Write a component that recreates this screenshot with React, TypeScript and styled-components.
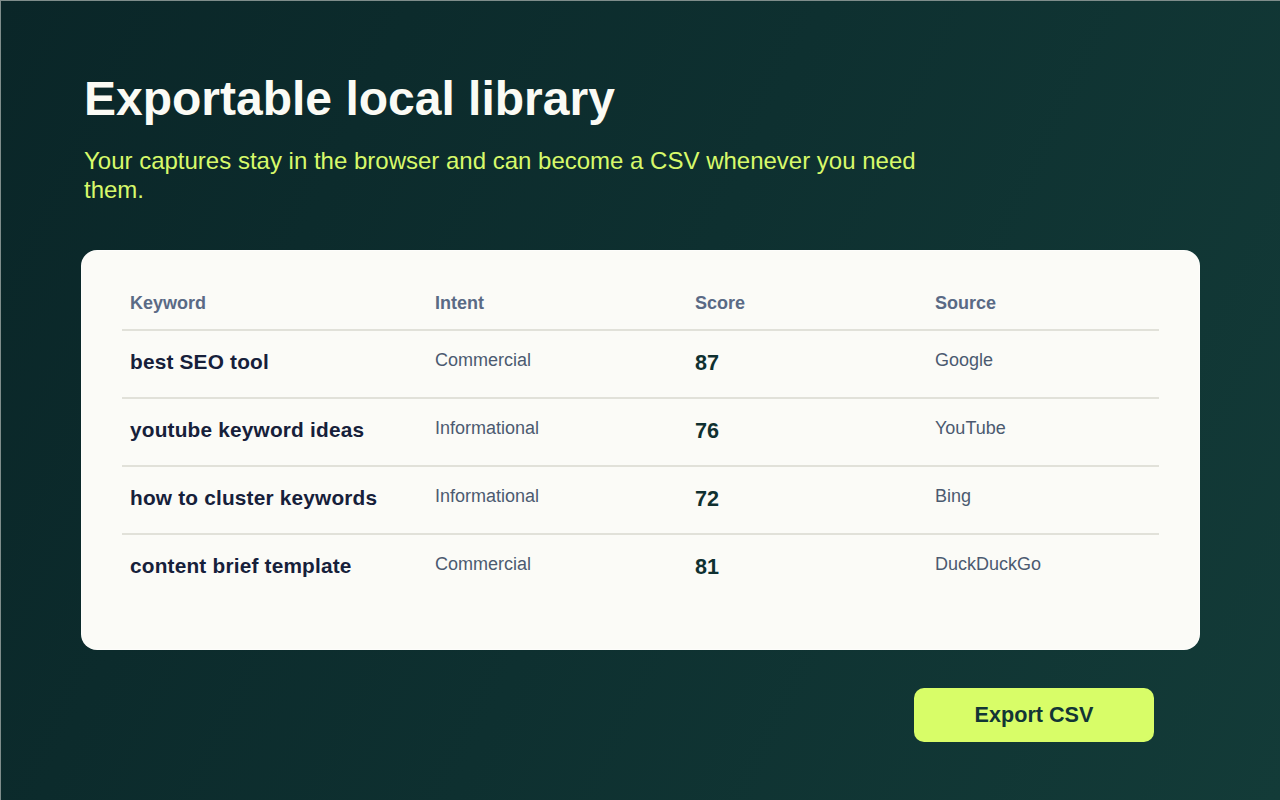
import React from "react";
import styled, { createGlobalStyle } from "styled-components";

type Row = {
  keyword: string;
  intent: string;
  score: number;
  source: string;
};

const rows: Row[] = [
  { keyword: "best SEO tool", intent: "Commercial", score: 87, source: "Google" },
  { keyword: "youtube keyword ideas", intent: "Informational", score: 76, source: "YouTube" },
  { keyword: "how to cluster keywords", intent: "Informational", score: 72, source: "Bing" },
  { keyword: "content brief template", intent: "Commercial", score: 81, source: "DuckDuckGo" },
];

function App() {
  return (
    <>
      <GlobalStyle />
      <Page>
        <Header>
          <Title>Exportable local library</Title>
          <Subtitle>
            Your captures stay in the browser and can become a CSV whenever you need them.
          </Subtitle>
        </Header>
        <Card>
          <HeadRow>
            <HeadCell>Keyword</HeadCell>
            <HeadCell>Intent</HeadCell>
            <HeadCell>Score</HeadCell>
            <HeadCell>Source</HeadCell>
          </HeadRow>
          {rows.map((r) => (
            <BodyRow key={r.keyword}>
              <Keyword>{r.keyword}</Keyword>
              <Muted>{r.intent}</Muted>
              <Score>{r.score}</Score>
              <Muted>{r.source}</Muted>
            </BodyRow>
          ))}
        </Card>
        <Actions>
          <ExportButton>Export CSV</ExportButton>
        </Actions>
      </Page>
    </>
  );
}

export default App;

const GlobalStyle = createGlobalStyle`
  * { box-sizing: border-box; }
  html, body {
    margin: 0;
    padding: 0;
    font-family: "Liberation Sans", Arial, sans-serif;
    background: #0c2a2b;
  }
`;

const Page = styled.div`
  min-height: 800px;
  padding: 71px 80px 0;
  background: linear-gradient(115deg, #0a2628 0%, #0e3030 50%, #133b38 100%);
  border-top: 1px solid #7f8d8b;
  border-left: 1px solid #7f8d8b;
`;

const Header = styled.div`
  max-width: 860px;
  padding-left: 3px;
`;

const Title = styled.h1`
  margin: 0 0 20px;
  font-size: 48px;
  font-weight: 700;
  line-height: 1.12;
  color: #fbfbf5;
`;

const Subtitle = styled.p`
  margin: 0;
  font-size: 24px;
  line-height: 29px;
  color: #d7f96a;
`;

const Card = styled.div`
  margin-top: 46px;
  height: 400px;
  padding: 40px 40px 48px;
  background: #fbfbf7;
  border: 1px solid rgba(255, 255, 255, 0.45);
  border-radius: 16px;
`;

const grid = `
  display: grid;
  grid-template-columns: 305px 260px 240px 1fr;
  align-items: start;
`;

const HeadRow = styled.div`
  ${grid};
  border-bottom: 2px solid #e1e1d9;
  margin-top: -1px;
`;

const HeadCell = styled.div`
  padding: 2px 8px 15px;
  font-size: 18px;
  line-height: 22px;
  font-weight: 700;
  color: #5a6a85;
`;

const BodyRow = styled.div`
  ${grid};
  height: 68px;
  &:not(:last-child) {
    border-bottom: 2px solid #e1e1d9;
  }
`;

const Cell = styled.div`
  padding: 19px 8px 0;
  line-height: normal;
`;

const Keyword = styled(Cell)`
  font-size: 20.8px;
  letter-spacing: 0.2px;
  font-weight: 700;
  color: #16203a;
`;

const Muted = styled(Cell)`
  font-size: 18px;
  color: #4b5a70;
`;

const Score = styled(Cell)`
  font-size: 21.6px;
  font-weight: 700;
  color: #0f3030;
`;

const Actions = styled.div`
  display: flex;
  justify-content: flex-end;
  margin-top: 38px;
  padding-right: 46px;
`;

const ExportButton = styled.button`
  width: 240px;
  height: 54px;
  border: none;
  border-radius: 10px;
  background: #d8fd68;
  color: #123535;
  font-family: "Liberation Sans", Arial, sans-serif;
  font-size: 21.6px;
  font-weight: 700;
  cursor: pointer;
`;
